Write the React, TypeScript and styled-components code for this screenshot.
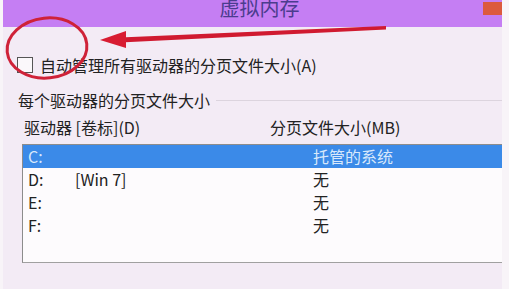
import React from "react";
import styled, { createGlobalStyle } from "styled-components";

const GlobalStyle = createGlobalStyle`
    html, body {
        margin: 0;
        padding: 0;
        background: #f8f4f8;
    }
    #root {
        width: 509px;
        height: 289px;
        overflow: hidden;
        position: relative;
    }
`;

interface DriveRow {
    drive: string;
    label: string;
    size: string;
    selected?: boolean;
}

const drives: DriveRow[] = [
    { drive: "C:", label: "", size: "托管的系统", selected: true },
    { drive: "D:", label: "[Win 7]", size: "无" },
    { drive: "E:", label: "", size: "无" },
    { drive: "F:", label: "", size: "无" },
];

export default function App() {
    return (
        <>
            <GlobalStyle />
            <SC.Window>
                <SC.TitleBar>
                    <span />
                    <SC.Title>虚拟内存</SC.Title>
                    <SC.CloseButton />
                </SC.TitleBar>
                <SC.Body>
                    <SC.CheckRow>
                        <SC.CheckBox />
                        <span>自动管理所有驱动器的分页文件大小(A)</span>
                    </SC.CheckRow>
                    <SC.GroupRow>
                        <span>每个驱动器的分页文件大小</span>
                        <SC.GroupLine />
                    </SC.GroupRow>
                    <SC.Header>
                        <span>驱动器 [卷标](D)</span>
                        <span>分页文件大小(MB)</span>
                    </SC.Header>
                    <SC.ListBox>
                        {drives.map((d) => (
                            <SC.ListRow key={d.drive} $selected={d.selected}>
                                <span>{d.drive}</span>
                                <span>{d.label}</span>
                                <span>{d.size}</span>
                            </SC.ListRow>
                        ))}
                    </SC.ListBox>
                </SC.Body>
            </SC.Window>
            <SC.Annotation width="509" height="289" viewBox="0 0 509 289">
                <ellipse cx="47" cy="48" rx="40" ry="30" fill="none" stroke="#cf2238" strokeWidth="3" transform="rotate(-6 47 48)" />
                <polygon points="120,37.5 386,26 386,29.5 120,42.5" fill="#d01a30" />
                <polygon points="100,40 126,31 126,48" fill="#d81c32" />
            </SC.Annotation>
        </>
    );
}

const SC = {
    Window: styled.div`
        margin-left: 3px;
        width: 499px;
        height: 289px;
        background: #f3ebf5;
        display: flex;
        flex-direction: column;
        font-family: "Noto Sans CJK SC", "Noto Sans", sans-serif;
        color: #222;
        font-size: 16px;
    `,
    TitleBar: styled.div`
        height: 27px;
        flex-shrink: 0;
        background: #c57ef3;
        display: grid;
        grid-template-columns: 1fr auto 1fr;
        overflow: hidden;
    `,
    Title: styled.div`
        font-size: 20px;
        line-height: 16px;
        color: #4b3c8e;
        margin-left: 14px;
    `,
    CloseButton: styled.div`
        justify-self: end;
        align-self: start;
        width: 19px;
        height: 13px;
        margin-top: 2px;
        background: #dc5a3e;
    `,
    Body: styled.div`
        padding: 30px 0 0 14px;
        display: flex;
        flex-direction: column;
    `,
    CheckRow: styled.div`
        display: flex;
        align-items: center;
        gap: 7px;
        height: 16px;
        line-height: 16px;
    `,
    CheckBox: styled.div`
        width: 14px;
        height: 14px;
        border: 1px solid #555;
        background: #fbf8fb;
    `,
    GroupRow: styled.div`
        display: flex;
        align-items: center;
        height: 20px;
        line-height: 20px;
        margin: 17px 0 0 1px;
    `,
    GroupLine: styled.div`
        flex: 1;
        height: 1px;
        margin-left: 6px;
        background: #dcd4de;
    `,
    Header: styled.div`
        display: grid;
        grid-template-columns: 246px 1fr;
        height: 20px;
        line-height: 20px;
        margin: 7px 0 0 7px;
    `,
    ListBox: styled.div`
        margin: 7px 0 0 5px;
        height: 117px;
        background: #fdfbfd;
        border: 1px solid #8c8c8c;
        border-right: none;
        border-bottom-color: #a0a0a0;
        display: flex;
        flex-direction: column;
    `,
    ListRow: styled.div<{ $selected?: boolean }>`
        display: grid;
        grid-template-columns: 47px 238px 1fr;
        height: 23px;
        line-height: 23px;
        padding-left: 5px;
        background: ${(p) => (p.$selected ? "#3b8ae8" : "transparent")};
        color: ${(p) => (p.$selected ? "#d8e8fb" : "#222")};
    `,
    Annotation: styled.svg`
        position: absolute;
        left: 0;
        top: 0;
        pointer-events: none;
    `,
};
